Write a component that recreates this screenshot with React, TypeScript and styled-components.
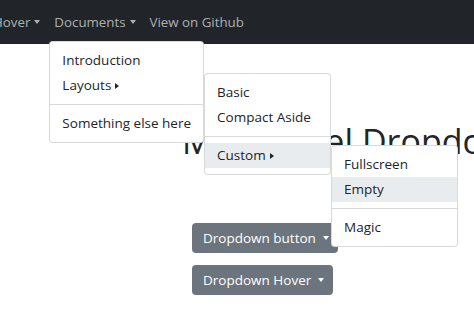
import styled, { createGlobalStyle } from 'styled-components'

type Entry = {
    label?: string
    divider?: boolean
    active?: boolean
    sub?: { offset: number; items: Entry[] }
}

const documents: Entry[] = [
    { label: 'Introduction' },
    {
        label: 'Layouts',
        sub: {
            offset: 0,
            items: [
                { label: 'Basic' },
                { label: 'Compact Aside' },
                { divider: true },
                {
                    label: 'Custom',
                    active: true,
                    sub: {
                        offset: 2,
                        items: [
                            { label: 'Fullscreen' },
                            { label: 'Empty', active: true },
                            { divider: true },
                            { label: 'Magic' },
                        ],
                    },
                },
            ],
        },
    },
    { divider: true },
    { label: 'Something else here' },
]

function DropdownMenu({ items, sub, offset = 0 }: { items: Entry[]; sub?: boolean; offset?: number }) {
    return (
        <Menu $sub={sub} $offset={offset}>
            {items.map((item, i) =>
                item.divider ? (
                    <Divider key={i} />
                ) : (
                    <MenuEntry key={i}>
                        <MenuItem $active={item.active}>
                            {item.label}
                            {item.sub && <CaretRight />}
                        </MenuItem>
                        {item.sub && <DropdownMenu items={item.sub.items} sub offset={item.sub.offset} />}
                    </MenuEntry>
                )
            )}
        </Menu>
    )
}

export default function App() {
    return (
        <>
            <GlobalStyle />
            <Navbar>
                <NavList>
                    <NavItem>
                        <NavLink>
                            Hover
                            <CaretDown />
                        </NavLink>
                    </NavItem>
                    <NavItem>
                        <NavLink>
                            Documents
                            <CaretDown />
                        </NavLink>
                        <DropdownMenu items={documents} />
                    </NavItem>
                    <NavItem>
                        <NavLink>View on Github</NavLink>
                    </NavItem>
                </NavList>
            </Navbar>
            <Main>
                <Title>Multi Level Dropdown</Title>
                <Buttons>
                    <DropButton>
                        Dropdown button
                        <CaretDown $gap={7} />
                    </DropButton>
                    <DropButton>
                        Dropdown Hover
                        <CaretDown $gap={7} />
                    </DropButton>
                </Buttons>
            </Main>
        </>
    )
}

const GlobalStyle = createGlobalStyle`
    html, body {
        margin: 0;
        padding: 0;
        background: #fff;
    }
    body {
        font-family: 'Open Sans', 'Noto Sans', sans-serif;
        color: #212529;
        overflow: hidden;
    }
`

const Navbar = styled.nav`
    height: 44px;
    background: #212529;
    display: flex;
    align-items: stretch;
`

const NavList = styled.ul`
    list-style: none;
    margin: 0 0 0 -14px;
    padding: 0;
    display: flex;
`

const NavItem = styled.li`
    position: relative;
    display: flex;
    align-items: center;
`

const NavLink = styled.a`
    display: flex;
    align-items: center;
    padding: 0 7px;
    font-size: 13.3px;
    color: rgba(255, 255, 255, 0.64);
    white-space: nowrap;
`

const CaretDown = styled.span<{ $gap?: number }>`
    display: inline-block;
    margin-left: ${(p) => p.$gap ?? 4}px;
    border-top: 4px solid currentColor;
    border-left: 3.5px solid transparent;
    border-right: 3.5px solid transparent;
`

const CaretRight = styled.span`
    display: inline-block;
    margin-left: 4px;
    vertical-align: middle;
    border-left: 4px solid currentColor;
    border-top: 3.5px solid transparent;
    border-bottom: 3.5px solid transparent;
`

const Menu = styled.ul<{ $sub?: boolean; $offset: number }>`
    position: absolute;
    top: ${(p) => (p.$sub ? `${p.$offset}px` : 'calc(100% - 3px)')};
    left: ${(p) => (p.$sub ? 'calc(100% + 1px)' : '2px')};
    z-index: 10;
    margin: 0;
    padding: 6px 0;
    list-style: none;
    min-width: 125px;
    background: #fff;
    border: 1px solid rgba(0, 0, 0, 0.15);
    border-radius: 4px;
`

const MenuEntry = styled.li`
    position: relative;
`

const MenuItem = styled.a<{ $active?: boolean }>`
    display: block;
    padding: 3px 12px;
    line-height: 19px;
    font-size: 13.5px;
    color: #212529;
    white-space: nowrap;
    background: ${(p) => (p.$active ? '#e9ecef' : 'transparent')};
`

const Divider = styled.li`
    height: 0;
    margin: 6px 0;
    border-top: 1px solid rgba(0, 0, 0, 0.15);
`

const Main = styled.main`
    display: flex;
    flex-direction: column;
`

const Title = styled.h1`
    margin: 77px 0 0;
    padding-left: 182px;
    font-size: 34px;
    font-weight: 400;
    line-height: 1.2;
    white-space: nowrap;
    color: #212529;
`

const Buttons = styled.div`
    display: flex;
    flex-direction: column;
    align-items: flex-start;
    gap: 12px;
    margin-top: 61px;
    padding-left: 192px;
`

const DropButton = styled.button`
    display: inline-flex;
    align-items: center;
    height: 30px;
    padding: 0 9px 0 11px;
    border: none;
    border-radius: 4px;
    background: #6c757d;
    color: #fff;
    font-family: 'Open Sans', 'Noto Sans', sans-serif;
    font-size: 13.5px;
`
